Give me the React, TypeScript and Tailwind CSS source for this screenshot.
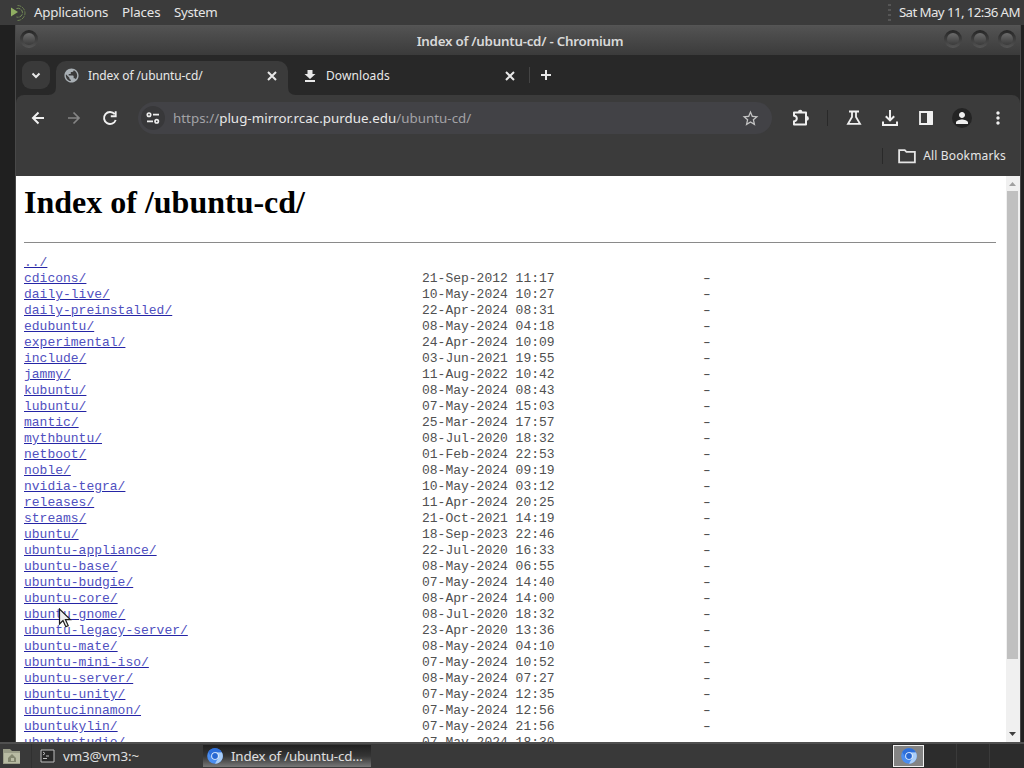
import React from "react";
import { MdPublic, MdPerson, MdMoreVert, MdStarBorder } from "react-icons/md";

const entries: [string, string][] = [
  ["cdicons/", "21-Sep-2012 11:17"],
  ["daily-live/", "10-May-2024 10:27"],
  ["daily-preinstalled/", "22-Apr-2024 08:31"],
  ["edubuntu/", "08-May-2024 04:18"],
  ["experimental/", "24-Apr-2024 10:09"],
  ["include/", "03-Jun-2021 19:55"],
  ["jammy/", "11-Aug-2022 10:42"],
  ["kubuntu/", "08-May-2024 08:43"],
  ["lubuntu/", "07-May-2024 15:03"],
  ["mantic/", "25-Mar-2024 17:57"],
  ["mythbuntu/", "08-Jul-2020 18:32"],
  ["netboot/", "01-Feb-2024 22:53"],
  ["noble/", "08-May-2024 09:19"],
  ["nvidia-tegra/", "10-May-2024 03:12"],
  ["releases/", "11-Apr-2024 20:25"],
  ["streams/", "21-Oct-2021 14:19"],
  ["ubuntu/", "18-Sep-2023 22:46"],
  ["ubuntu-appliance/", "22-Jul-2020 16:33"],
  ["ubuntu-base/", "08-May-2024 06:55"],
  ["ubuntu-budgie/", "07-May-2024 14:40"],
  ["ubuntu-core/", "08-Apr-2024 14:00"],
  ["ubuntu-gnome/", "08-Jul-2020 18:32"],
  ["ubuntu-legacy-server/", "23-Apr-2020 13:36"],
  ["ubuntu-mate/", "08-May-2024 04:10"],
  ["ubuntu-mini-iso/", "07-May-2024 10:52"],
  ["ubuntu-server/", "08-May-2024 07:27"],
  ["ubuntu-unity/", "07-May-2024 12:35"],
  ["ubuntucinnamon/", "07-May-2024 12:56"],
  ["ubuntukylin/", "07-May-2024 21:56"],
  ["ubuntustudio/", "07-May-2024 18:30"],
];

function Glyph({ d, size = 16, width = 2, className = "" }: { d: string; size?: number; width?: number; className?: string }) {
  return (
    <svg width={size} height={size} viewBox="0 0 16 16" fill="none" stroke="currentColor" strokeWidth={width} className={`shrink-0 ${className}`}>
      <path d={d} />
    </svg>
  );
}

function Orb() {
  return (
    <span className="flex h-[18px] w-[18px] items-center justify-center rounded-full bg-linear-to-b from-[#252525] to-[#555]">
      <span className="h-3 w-3 rounded-full bg-linear-to-b from-[#6c6c6c] to-[#3b3b3b]" />
    </span>
  );
}

function ChromiumLogo() {
  return (
    <svg width="16" height="16" viewBox="0 0 16 16" className="shrink-0">
      <circle cx="8" cy="8" r="7.8" fill="#4a8df0" />
      <path d="M8 4.3h6.9A7.8 7.8 0 0 1 8 15.8l3.2-5.9z" fill="#a9cdf8" />
      <path d="M1.2 4.1A7.8 7.8 0 0 1 14.8 4.3H8A3.7 3.7 0 0 0 4.6 9.6z" fill="#2d6fdb" />
      <circle cx="8" cy="8" r="3.8" fill="#e8f1fd" />
      <circle cx="8" cy="8" r="2.9" fill="#2767d2" />
    </svg>
  );
}

function TopPanel() {
  return (
    <header className="flex h-[25px] shrink-0 items-center bg-[#3b3b3b] pr-1 pl-[9px] text-[13.33px] text-[#e6e6e6]">
      <svg width="20" height="20" viewBox="0 0 20 20" className="mr-[5px]" fill="none">
        <path d="M2 4.5v9l7-4.5z" fill="#90ae62" />
        <path d="M8.5 2.5a7.5 7.5 0 1 1 0 15" stroke="#6c8150" strokeDasharray="4 1" />
        <path d="M7.5 5.5a4.5 4.5 0 1 1 0 8.5" stroke="#76905a" strokeDasharray="4 1" />
      </svg>
      <span className="w-[88px] tracking-[-0.2px]">Applications</span>
      <span className="w-[52px] tracking-[-0.15px]">Places</span>
      <span className="tracking-[-0.3px]">System</span>
      <span className="mr-[8px] ml-auto flex flex-col gap-[3px]">
        <i className="h-[2px] w-[3px] bg-[#565656]" />
        <i className="h-[2px] w-[3px] bg-[#565656]" />
        <i className="h-[2px] w-[3px] bg-[#565656]" />
        <i className="h-[2px] w-[3px] bg-[#565656]" />
      </span>
      <span className="whitespace-nowrap tracking-[-0.61px]">Sat May 11, 12:36 AM</span>
    </header>
  );
}

function TabStrip() {
  return (
    <div className="flex h-10 shrink-0 bg-[#282828] pl-[6px] text-[12px] text-[#e8e8e8]">
      <div className="mt-[6px] flex h-7 w-7 items-center justify-center rounded-[9px] bg-[#3a3a3a]">
        <Glyph d="M4.5 6.5 8 10l3.5-3.5" />
      </div>
      <div className="relative mt-[6px] ml-[6px] flex w-[232px] items-center rounded-t-[10px] bg-[#3b3b3b] pb-[5px] pl-[7px]">
        <MdPublic size={17} className="text-[#a9b0b5]" />
        <span className="ml-2 tracking-[-0.1px]">Index of /ubuntu-cd/</span>
        <Glyph d="m4 4 8 8m0-8-8 8" className="mr-2 ml-auto" />
        <svg className="absolute right-[-8px] bottom-0" width="8" height="8"><path d="M0 0Q0 8 8 8H0z" fill="#3b3b3b" /></svg>
        <svg className="absolute bottom-0 left-[-8px]" width="8" height="8"><path d="M8 0Q8 8 0 8H8z" fill="#3b3b3b" /></svg>
      </div>
      <div className="mt-[6px] flex h-[29px] w-[241px] items-center pl-[14px]">
        <svg width="16" height="16" viewBox="0 0 16 16" fill="currentColor"><path d="M5.5 2h5v4h3L8 11 2.5 6h3zM3 12h10v2H3z" /></svg>
        <span className="ml-2 tracking-[0.1px]">Downloads</span>
        <Glyph d="m4 4 8 8m0-8-8 8" className="mr-[11px] ml-auto" />
      </div>
      <div className="mt-[12px] h-4 w-px bg-[#444]" />
      <Glyph d="M8 3v10M3 8h10" className="mt-[12px] ml-[8px]" />
    </div>
  );
}

function Toolbar() {
  return (
    <div className="flex h-[46px] shrink-0 items-center rounded-t-[8px] bg-[#3b3b3b] pl-[14px] text-[#f0f0f0]">
      <Glyph d="M14 8H3m5.5-5.5L3 8l5.5 5.5" />
      <Glyph d="M2 8h11M7.5 2.5 13 8l-5.5 5.5" width={1.7} className="ml-[20px] text-[#858585]" />
      <Glyph d="M12.7 4.2A6 6 0 1 0 13.7 10M13.7 1.2v5H8.8" width={1.9} className="ml-[20px]" />
      <div className="ml-[20px] flex h-8 w-[634px] items-center rounded-full bg-[#424246] pl-[3px]">
        <span className="flex h-6 w-6 items-center justify-center rounded-full bg-[#38383a]">
          <svg width="14" height="12" viewBox="0 0 14 12" fill="none" stroke="#eee" strokeWidth="1.7">
            <circle cx="3" cy="2.7" r="1.7" /><path d="M7 2.7h6M1 9.3h6" /><circle cx="10.7" cy="9.3" r="1.7" />
          </svg>
        </span>
        <span className="mt-px ml-2 text-[13.33px] tracking-[0.03px] text-[#a3a3a6]">https://<span className="text-[#e8e8e8]">plug-mirror.rcac.purdue.edu</span>/ubuntu-cd/</span>
        <MdStarBorder size={19} className="mr-[12px] ml-auto text-[#c3c3c3]" />
      </div>
      <svg width="18" height="18" viewBox="0 0 18 18" className="ml-[20px]" fill="none" stroke="currentColor" strokeWidth="2">
        <path d="M2 3.5h12v12H2v-3.2a2.8 2.8 0 0 0 0-5.6z" strokeLinejoin="round" />
        <path d="M6 3a2.2 2.2 0 0 1 4.4 0zM14.5 7a2.4 2.4 0 0 1 0 4.8z" fill="currentColor" stroke="none" />
      </svg>
      <div className="ml-[17px] h-4 w-px bg-[#292929]" />
      <svg width="16" height="16" viewBox="0 0 16 16" className="ml-[18px]" fill="none" stroke="currentColor" strokeWidth="1.8">
        <path d="M3 1.5h10M6 2v5L2 13.8h12L10 7V2" />
      </svg>
      <svg width="18" height="18" viewBox="0 0 18 18" className="ml-[19px]" fill="none" stroke="currentColor" strokeWidth="2">
        <path d="M9 1v10M4.8 7.2 9 11.4l4.2-4.2M2 12.5V16h14v-3.5" />
      </svg>
      <svg width="16" height="16" viewBox="0 0 16 16" className="ml-[19px]">
        <path d="M2 2h12v12H2z" fill="none" stroke="currentColor" strokeWidth="1.8" /><path d="M9 2h6v12H9z" fill="currentColor" />
      </svg>
      <span className="ml-[18px] flex h-5 w-5 items-center justify-center rounded-full bg-[#242424]"><MdPerson size={18} /></span>
      <MdMoreVert size={20} className="ml-[16px]" />
    </div>
  );
}

function Listing() {
  return (
    <div className="flex h-[566px] shrink-0 overflow-hidden bg-white">
      <main className="h-full flex-1 overflow-hidden px-2 pr-[10px]">
        <h1 className="mt-[8px] h-[37px] font-['Liberation_Serif',serif] text-[32px] leading-[37px] font-bold text-black">Index of /ubuntu-cd/</h1>
        <hr className="mt-[21px] border-t border-[#8a8a8a]" />
        <div className="mt-[12px] font-['Liberation_Mono',monospace] text-[13px] leading-4 whitespace-pre text-[#505050]">
          <div className="h-4"><a className="text-[#5555b5] underline decoration-[#2525a5]">../</a></div>
          {entries.map(([name, date]) => (
            <div key={name} className="flex h-4">
              <span className="w-[398px]"><a className="text-[#5050c0] underline decoration-[#2525a5]">{name}</a></span>
              <span className="w-[281px]">{date}</span>
              <span className="scale-x-150">-</span>
            </div>
          ))}
        </div>
      </main>
      <div className="flex w-[14px] flex-col items-center bg-[#f0f0f0] pr-px">
        <svg width="13" height="15"><path d="M3 10h7L6.5 6z" fill="#a0a0a0" /></svg>
        <div className="h-[468px] w-[11px] bg-[#c0c0c0]" />
        <svg width="13" height="15" className="mt-auto"><path d="M3 5h7L6.5 9z" fill="#3e3e3e" /></svg>
      </div>
    </div>
  );
}

function BottomPanel() {
  return (
    <footer className="flex h-[26px] shrink-0 items-center border-t-2 border-[#505050] bg-[#393939] text-[13.33px] text-[#e0e0e0]">
      <svg width="20" height="20" viewBox="0 0 20 20" className="ml-[2px]">
        <path d="M1 3h7l2 2h8v13H1z" fill="#9a9d88" /><path d="M2 7h16v10H2z" fill="#b8bba3" />
        <path d="m10 8-4 4v4h8v-4zM9 12h3v3H9z" fill="#82866f" fillRule="evenodd" />
      </svg>
      <div className="ml-[9px] flex h-full w-[171px] items-center border-l border-[#303030] pl-[8px]">
        <svg width="15" height="14" viewBox="0 0 15 14" fill="none" stroke="#bdbdbd"><path d="M1 1h13v12H1z" fill="#272727" /><path d="m3 3 2 1.5L3 6M6 7h3M3 9.5h4" /></svg>
        <span className="mt-px ml-[8px] tracking-[-0.1px]">vm3@vm3:~</span>
      </div>
      <div className="ml-px flex h-[22px] w-[168px] items-center bg-linear-to-b from-[#202020] via-[#353535] to-[#787878] pl-1">
        <ChromiumLogo />
        <span className="mt-px ml-2 tracking-[-0.18px] whitespace-nowrap">Index of /ubuntu-cd…</span>
      </div>
      <div className="ml-auto flex h-full w-[132px] items-center bg-[#2c2c2c]">
        <div className="ml-px flex h-[22px] w-[31px] items-center justify-center border border-[#f0f0f0] bg-[#848484]"><ChromiumLogo /></div>
        <div className="ml-[32px] h-full w-px bg-[#3a3a3a]" />
        <div className="ml-[32px] h-full w-px bg-[#3a3a3a]" />
      </div>
    </footer>
  );
}

export default function App() {
  return (
    <div className="relative flex h-[768px] w-[1024px] flex-col overflow-hidden bg-[#202020] font-['Noto_Sans',sans-serif]">
      <TopPanel />
      <section className="ml-[15px] flex h-[717px] w-[1006px] flex-col border-x border-[#484848] bg-[#282828]">
        <div className="flex h-[30px] shrink-0 items-center border-t border-[#555] bg-linear-to-b from-[#535353] to-[#3b3b3b] pr-1 pl-1">
          <div className="w-[82px] pb-1"><Orb /></div>
          <span className="flex-1 pt-[2px] pl-1 text-center text-[13.33px] font-semibold tracking-[-0.25px] text-[#d9d9d9]">Index of /ubuntu-cd/ - Chromium</span>
          <div className="flex w-[82px] justify-end gap-[9px] pb-1"><Orb /><Orb /><Orb /></div>
        </div>
        <TabStrip />
        <Toolbar />
        <div className="flex h-[35px] shrink-0 items-center justify-end bg-[#3b3b3b] pr-[14px] pb-[6px] text-[12px] text-[#e5e5e5]">
          <span className="mr-[15px] h-4 w-px bg-[#292929]" />
          <Glyph d="M1 2.8h5L7.5 4.3H15v9.4H1z" size={18} width={1.6} />
          <span className="ml-[7px] tracking-[0.15px]">All Bookmarks</span>
        </div>
        <Listing />
      </section>
      <BottomPanel />
      <svg className="absolute top-[608px] left-[58px]" width="14" height="21" viewBox="0 0 14 21"><path d="M1.5 1v15l3.5-3.5 2.8 6.2 2.4-1.1-2.8-6h5z" fill="#eee" stroke="#1c1c1c" strokeWidth="1.2" /></svg>
    </div>
  );
}
